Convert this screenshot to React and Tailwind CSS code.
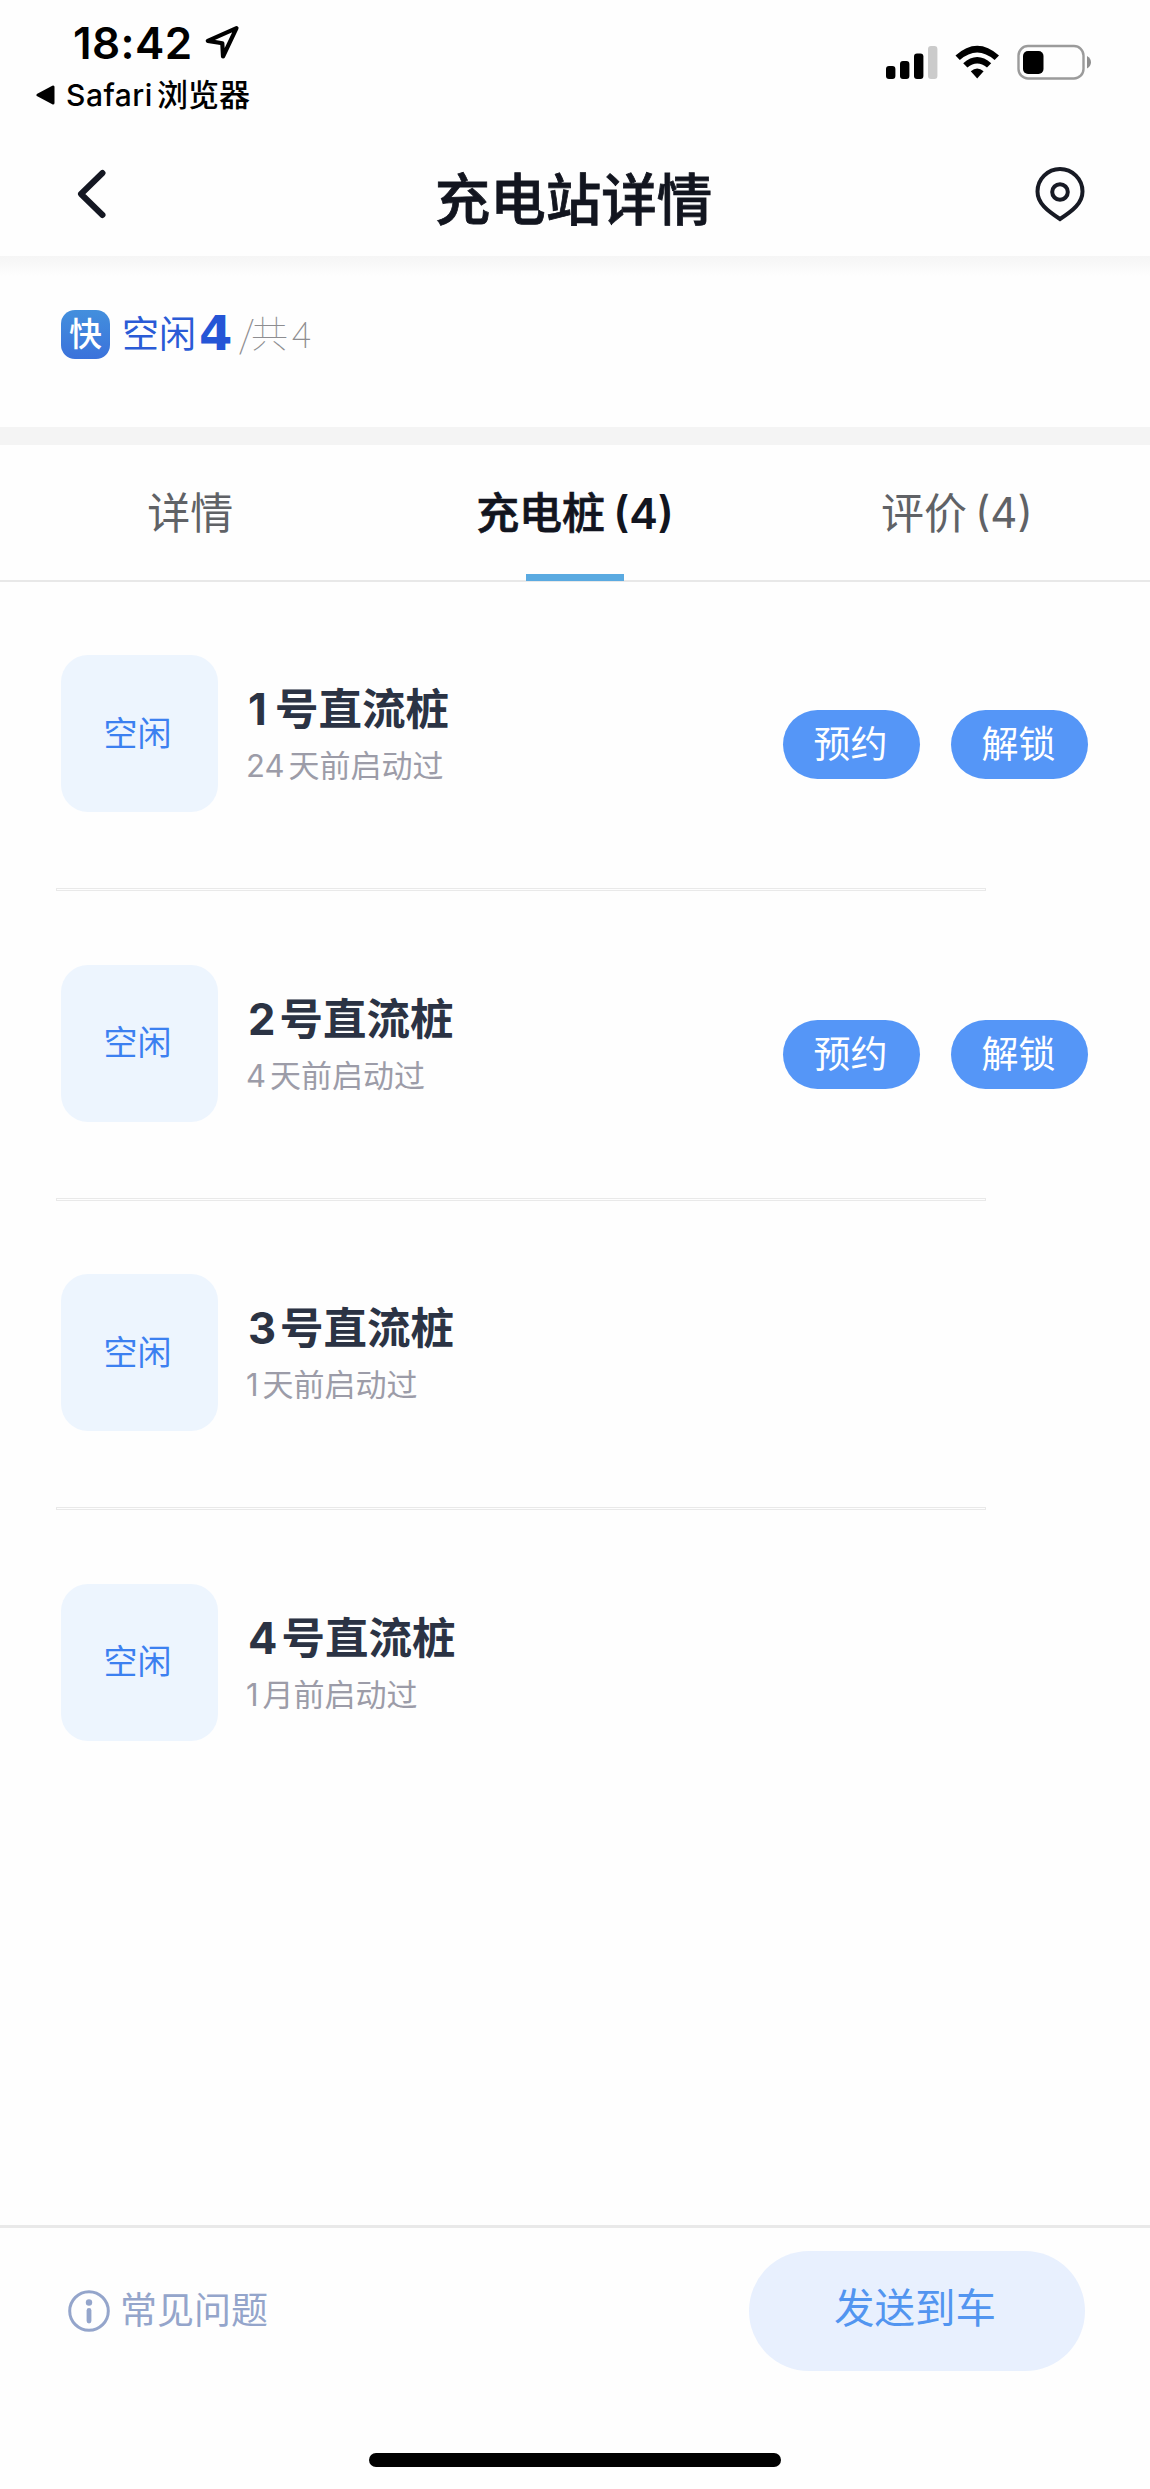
import React from "react";

const piles = [
  { no: "1", num: "24", unit: "天", actions: true },
  { no: "2", num: "4", unit: "天", actions: true },
  { no: "3", num: "1", unit: "天", actions: false },
  { no: "4", num: "1", unit: "月", actions: false },
];

function StatusBar() {
  return (
    <div className="flex h-[120px] justify-between">
      <div className="pt-[19px]">
        <div className="flex items-center pl-[73px]">
          <span className="w-[132px] text-[44px] leading-[48px] font-semibold tracking-[0.4px] text-black">18:42</span>
          <svg width="36" height="36" viewBox="0 0 36 36" className="block" fill="none" stroke="#000" strokeWidth="4.2" strokeLinejoin="round">
            <path d="M31.500 3.200 L2.800 15.900 L17.300 18.200 L18 31.500 Z" />
          </svg>
        </div>
        <div className="flex items-center pl-9 text-[30px] leading-[56px] text-black">
          <svg width="19" height="20" viewBox="0 0 19 20" className="mr-[11px] block">
            <path d="M17 2 V18 L2 10 Z" stroke="#000" strokeWidth="3" strokeLinejoin="round" />
          </svg>
          <span className="w-[91px] font-medium tracking-[0.5px]">Safari</span>
          <span className="text-[31px] font-medium">浏览器</span>
        </div>
      </div>
      <svg width="210" height="40" viewBox="884 42 210 40" className="mt-[42px] mr-14 block">
        <rect x="886" y="66" width="9.4" height="13" rx="3" />
        <rect x="900" y="61" width="9.4" height="18" rx="3" />
        <rect x="914" y="53.500" width="9.400" height="25.500" rx="3" />
        <rect x="928" y="46" width="9.400" height="33" rx="3" fill="#cbcbcb" />
        <path d="M955.500 55.500 Q977.200 36 999 55.500 L994.600 60 Q977.200 45 959.800 60 Z" />
        <path d="M963.200 63.200 Q977.200 51 991.200 63.200 L987 67.500 Q977.200 59.500 967.400 67.500 Z" />
        <path d="M970.800 71.200 Q977.200 66 983.600 71.200 L977.200 78.500 Z" />
        <rect x="1018.500" y="46" width="65" height="32.500" rx="9.500" fill="none" stroke="#9b9b9b" strokeWidth="2.400" />
        <rect x="1023" y="51" width="20.500" height="23" rx="5" />
        <path d="M1087 56 Q1091 58.500 1091 62.200 Q1091 66 1087 68.500 Z" fill="#8f8f8f" />
      </svg>
    </div>
  );
}

function NavBar() {
  return (
    <div className="flex h-[136px] items-start justify-between pr-[64px] pl-[76px]">
      <svg width="32" height="52" viewBox="0 0 32 52" className="mt-[49px] block" fill="none" stroke="#141722" strokeWidth="6" strokeLinecap="round" strokeLinejoin="round">
        <path d="M26.500 4 L5 25 L26.500 46" />
      </svg>
      <h1 className="mt-[50px] ml-[5px] text-[55.500px] leading-[60px] font-medium text-[#12151f] [-webkit-text-stroke:0.8px_#12151f]">充电站详情</h1>
      <svg width="52" height="56" viewBox="0 0 52 56" className="mt-[46px] block" fill="none" stroke="#171a24" strokeWidth="4">
        <path d="M26 53 C13 44.500 3.500 37 3.500 25.500 A22.500 22.500 0 0 1 48.500 25.500 C48.500 37 39 44.500 26 53 Z" />
        <circle cx="26" cy="26" r="7.800" />
      </svg>
    </div>
  );
}

function Summary() {
  return (
    <div className="h-[171px] bg-gradient-to-b from-[#f5f5f5] from-0% to-[#fefefe] to-[12%] pt-[54px] pl-[61px]">
      <div className="flex h-[49px] items-center">
        <div className="flex size-[49px] items-center justify-center rounded-[14px] bg-gradient-to-b from-[#438fdd] to-[#3b72db] text-[33px] leading-[49px] font-medium text-white">快</div>
        <span className="ml-[12px] w-[77px] text-[37px] leading-[49px] text-[#2a5bd6]">空闲</span>
        <span className="w-[40px] pb-[2px] font-['DejaVu_Sans',sans-serif] text-[48px] leading-[45px] font-bold text-[#2555d6]">4</span>
        <span className="flex pb-[4px] font-['Noto_Sans_CJK_SC',sans-serif] text-[37px] leading-[45px] font-thin text-[#8d8d90]">
          <span className="w-[12px]">/</span>
          <span className="w-[41px]">共</span>
          <span>4</span>
        </span>
      </div>
    </div>
  );
}

function Tabs() {
  return (
    <div className="grid h-[137px] grid-cols-3 border-b-2 border-[#e8e8e8] text-[43px] leading-[60px] text-[#606266]">
      <div className="flex justify-center pt-[38px] pr-[3px]"><span>详情</span></div>
      <div className="flex flex-col items-center justify-between pt-[38px]">
        <div className="flex text-[#12151f]">
          <span className="font-medium [-webkit-text-stroke:0.7px_#12151f]">充电桩</span>
          <span className="ml-[8px] font-semibold">(4)</span>
        </div>
        <div className="z-10 -mb-px h-[7px] w-[98px] bg-[#5aaae1]" />
      </div>
      <div className="flex justify-center pt-[38px] pr-[3px]"><span>评价</span><span className="ml-[8px] text-[42px]">(4)</span></div>
    </div>
  );
}

function ActionButton({ children }) {
  return (
    <button className="flex h-[69px] w-[137px] items-center justify-center rounded-full bg-[#5596f7] pr-[2px] text-[37px] leading-[69px] text-white">{children}</button>
  );
}

function PileRow({ pile, last }) {
  return (
    <div className="h-[309.500px]">
      <div className="flex h-[306px] items-start pr-[62px] pl-[61px]">
        <div className="mt-[73px] flex size-[157px] shrink-0 items-center justify-center rounded-[27px] bg-[#edf5fe] pr-1 text-[34px] leading-[60px] text-[#3c80f0]">空闲</div>
        <div className="mt-[97px] ml-[28px] flex-1">
          <div className="flex pl-[2px] text-[43.500px] leading-[60px] font-bold text-[#2b3344]">
            <span className="min-w-[23px]">{pile.no}</span><span className="ml-[4px]">号直流桩</span>
          </div>
          <div className="-mt-[3px] flex text-[31px] leading-[60px] text-[#9c9ca8]">
            <span>{pile.num}</span><span className="ml-[4px]">{pile.unit}前启动过</span>
          </div>
        </div>
        {pile.actions && (
          <div className="mt-[128px] flex gap-[31px]">
            <ActionButton>预约</ActionButton>
            <ActionButton>解锁</ActionButton>
          </div>
        )}
      </div>
      {!last && <div className="ml-14 h-[3px] w-[930px] border border-[#e9e9e9]" />}
    </div>
  );
}

function Footer() {
  return (
    <footer className="h-[264px] border-t-[3px] border-[#e9e9e9]">
      <div className="flex items-start justify-between pr-[65px] pl-[68px]">
        <div className="mt-[62px] flex h-[42px] items-center text-[37px] leading-[42px] text-[#94a5cb]">
          <svg width="42" height="42" viewBox="0 0 42 42" className="mr-[10px] block" fill="none" stroke="#94a5cb">
            <circle cx="21" cy="21" r="19.300" strokeWidth="3" />
            <circle cx="21" cy="12.500" r="3.200" fill="#94a5cb" stroke="none" />
            <path d="M21 20.500 V31" strokeWidth="4.800" strokeLinecap="round" />
          </svg>
          <span>常见问题</span>
        </div>
        <button className="mt-[23px] flex h-[120px] w-[336px] items-center justify-center rounded-full bg-[#e8f0fe] pr-[4px] pb-[5px] text-[40.500px] leading-[60px] text-[#5295f0]">发送到车</button>
      </div>
      <div className="mx-auto mt-[82px] h-[14px] w-[412px] rounded-full bg-black" />
    </footer>
  );
}

export default function App() {
  return (
    <div className="flex h-[2489px] w-[1150px] flex-col overflow-hidden bg-[#fefefe] font-['Inter','Noto_Sans_CJK_SC',sans-serif] whitespace-nowrap">
      <StatusBar />
      <NavBar />
      <Summary />
      <div className="h-[18px] bg-[#f4f4f4]" />
      <Tabs />
      <main className="flex-1">
        {piles.map((p, i) => (
          <PileRow key={p.no} pile={p} last={i === piles.length - 1} />
        ))}
      </main>
      <Footer />
    </div>
  );
}
